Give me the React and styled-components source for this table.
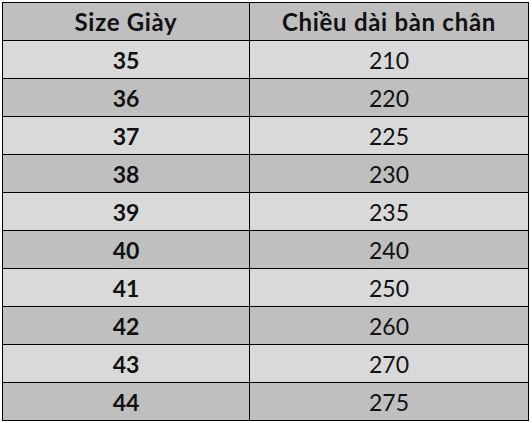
import React from "react";
import styled, { createGlobalStyle } from "styled-components";

const GlobalStyle = createGlobalStyle`
  html, body {
    margin: 0;
    padding: 0;
    background: #ffffff;
  }
  body {
    font-family: Lato, "Open Sans", "Noto Sans", sans-serif;
  }
`;

const sizes = [
  ["35", "210"],
  ["36", "220"],
  ["37", "225"],
  ["38", "230"],
  ["39", "235"],
  ["40", "240"],
  ["41", "250"],
  ["42", "260"],
  ["43", "270"],
  ["44", "275"],
];

const Page = styled.div`
  padding: 2px 0 0 2px;
`;

const Table = styled.div`
  display: grid;
  grid-template-columns: 246px 278px;
  grid-auto-rows: 37px;
  gap: 1px;
  padding: 1px;
  width: max-content;
  background: #000;
`;

const Cell = styled.div`
  display: flex;
  align-items: center;
  justify-content: center;
  background: ${(p) => (p.$light ? "#d9d9d9" : "#bfbfbf")};
  color: #111;
  font-size: 23px;
  font-weight: ${(p) => (p.$bold ? 700 : 400)};
  line-height: 1;
  padding-top: 1px;
`;

const HeadCell = styled(Cell)`
  font-size: 24px;
  letter-spacing: 0.7px;
`;

export default function App() {
  return (
    <>
      <GlobalStyle />
      <Page>
        <Table>
          <HeadCell $bold>Size Giày</HeadCell>
          <HeadCell $bold>Chiều dài bàn chân</HeadCell>
          {sizes.map(([size, length], index) => (
            <React.Fragment key={size}>
              <Cell $bold $light={index % 2 === 0}>
                {size}
              </Cell>
              <Cell $light={index % 2 === 0}>{length}</Cell>
            </React.Fragment>
          ))}
        </Table>
      </Page>
    </>
  );
}
